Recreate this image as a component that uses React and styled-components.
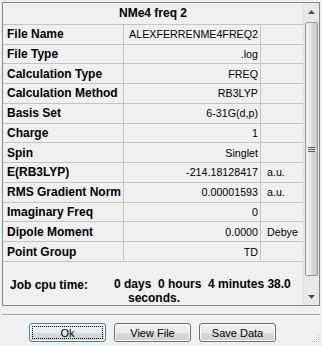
import React from 'react';
import styled, { createGlobalStyle } from 'styled-components';

const GlobalStyle = createGlobalStyle`
    html, body {
        margin: 0;
        padding: 0;
        background: #f0f0f0;
    }
    body {
        font-family: "Liberation Sans", Arial, sans-serif;
        font-size: 11px;
        color: #000;
    }
`;

const Window = styled.div`
    width: 322px;
    height: 346px;
    background: #f0f0f0;
    box-sizing: border-box;
    padding-top: 2px;
    position: relative;
    overflow: hidden;
`;

const Panel = styled.div`
    margin: 0 2px;
    height: 304px;
    border: 1px solid #828790;
    box-sizing: border-box;
    display: flex;
`;

const Content = styled.div`
    width: 300px;
    display: flex;
    flex-direction: column;
`;

const Title = styled.div`
    height: 21px;
    border-bottom: 1px solid #c4c4c4;
    display: flex;
    align-items: center;
    justify-content: center;
    font-weight: bold;
    font-size: 12px;
`;

const Row = styled.div`
    display: grid;
    grid-template-columns: 120px 136px 42px;
    column-gap: 1px;
    height: 19px;
    border-bottom: 1px solid #c4c4c4;
    background: linear-gradient(to right, transparent 120px, #c4c4c4 120px, #c4c4c4 121px, transparent 121px, transparent 257px, #c4c4c4 257px, #c4c4c4 258px, transparent 258px);
`;

const Cell = styled.div`
    display: flex;
    align-items: center;
    white-space: nowrap;
    overflow: hidden;
    justify-content: ${p => (p.$right ? 'flex-end' : 'flex-start')};
    padding: ${p => (p.$right ? '0 2px 0 0' : p.$unit ? '0 0 0 6px' : '0 0 0 4px')};
    font-weight: ${p => (p.$bold ? 'bold' : 'normal')};
    font-size: ${p => (p.$bold ? '12px' : '10.7px')};
`;

const Footer = styled.div`
    flex: 1;
    display: flex;
    padding: 16px 0 0 7px;
    font-weight: bold;
    font-size: 12px;
`;

const FooterLabel = styled.div`
    width: 104px;
`;

const FooterValue = styled.div`
    line-height: 14px;
    margin-top: -1px;
`;

const Indent = styled.div`
    padding-left: 14px;
`;

const ScrollBar = styled.div`
    width: 16px;
    background: #e8e8e8;
    border-left: 1px solid #e3e3e3;
    box-sizing: border-box;
    display: flex;
    flex-direction: column;
    align-items: center;
`;

const Arrow = styled.div`
    height: 17px;
    width: 100%;
    display: flex;
    align-items: center;
    justify-content: center;
`;

const Thumb = styled.div`
    width: 13px;
    margin-top: 2px;
    height: 254px;
    box-sizing: border-box;
    border: 1px solid #979797;
    border-radius: 2px;
    background: linear-gradient(to right, #f2f2f2, #e6e6e6 45%, #d7d7d7 55%, #cfcfcf);
    display: flex;
    align-items: center;
    justify-content: center;
`;

const Separator = styled.div`
    margin: 8px 2px 0 2px;
    border-top: 1px solid #a0a0a0;
    border-bottom: 1px solid #ffffff;
`;

const ButtonRow = styled.div`
    display: flex;
    gap: 8px;
    padding: 7px 0 0 29px;
`;

const Button = styled.button`
    width: 77px;
    height: 19px;
    padding: 0;
    font-family: "Liberation Sans", Arial, sans-serif;
    font-size: 11px;
    color: #000;
    border: 1px solid ${p => (p.$default ? '#3c7fb1' : '#707070')};
    border-radius: 3px;
    background: linear-gradient(to bottom, #f2f2f2 0%, #ebebeb 50%, #dddddd 50%, #cfcfcf 100%);
    box-shadow: inset 0 0 0 1px #fcfcfc;
    position: relative;

    &::after {
        content: '';
        display: ${p => (p.$default ? 'block' : 'none')};
        position: absolute;
        inset: 2px;
        border: 1px dotted #000;
    }
`;

const Grip = styled.svg`
    position: absolute;
    right: 2px;
    bottom: 3px;
`;

const rows = [
    ['File Name', 'ALEXFERRENME4FREQ2', ''],
    ['File Type', '.log', ''],
    ['Calculation Type', 'FREQ', ''],
    ['Calculation Method', 'RB3LYP', ''],
    ['Basis Set', '6-31G(d,p)', ''],
    ['Charge', '1', ''],
    ['Spin', 'Singlet', ''],
    ['E(RB3LYP)', '-214.18128417', 'a.u.'],
    ['RMS Gradient Norm', '0.00001593', 'a.u.'],
    ['Imaginary Freq', '0', ''],
    ['Dipole Moment', '0.0000', 'Debye'],
    ['Point Group', 'TD', ''],
];

export default function App() {
    return (
        <Window>
            <GlobalStyle />
            <Panel>
                <Content>
                    <Title>NMe4 freq 2</Title>
                    {rows.map(([label, value, unit]) => (
                        <Row key={label}>
                            <Cell $bold>{label}</Cell>
                            <Cell $right>{value}</Cell>
                            <Cell $unit>{unit}</Cell>
                        </Row>
                    ))}
                    <Footer>
                        <FooterLabel>Job cpu time:</FooterLabel>
                        <FooterValue>
                            <div>0 days&nbsp; 0 hours&nbsp; 4 minutes 38.0</div>
                            <Indent>seconds.</Indent>
                        </FooterValue>
                    </Footer>
                </Content>
                <ScrollBar>
                    <Arrow>
                        <svg width="7" height="4" viewBox="0 0 7 4"><path d="M0 4 L3.5 0 L7 4 Z" fill="#4d4d4d" /></svg>
                    </Arrow>
                    <Thumb>
                        <svg width="7" height="7" viewBox="0 0 7 7">
                            <path d="M0 1.5 H7 M0 3.5 H7 M0 5.5 H7" stroke="#5a5a5a" strokeWidth="1" />
                        </svg>
                    </Thumb>
                    <div style={{ flex: 1 }} />
                    <Arrow>
                        <svg width="7" height="4" viewBox="0 0 7 4"><path d="M0 0 L3.5 4 L7 0 Z" fill="#4d4d4d" /></svg>
                    </Arrow>
                </ScrollBar>
            </Panel>
            <Separator />
            <ButtonRow>
                <Button $default>Ok</Button>
                <Button>View File</Button>
                <Button>Save Data</Button>
            </ButtonRow>
            <Grip width="8" height="8" viewBox="0 0 8 8">
                <rect x="6" y="0" width="1" height="1" fill="#bcbcbc" />
                <rect x="4" y="2" width="1" height="1" fill="#bcbcbc" />
                <rect x="6" y="2" width="1" height="1" fill="#bcbcbc" />
                <rect x="2" y="4" width="1" height="1" fill="#bcbcbc" />
                <rect x="4" y="4" width="1" height="1" fill="#bcbcbc" />
                <rect x="6" y="4" width="1" height="1" fill="#bcbcbc" />
                <rect x="0" y="6" width="1" height="1" fill="#bcbcbc" />
                <rect x="2" y="6" width="1" height="1" fill="#bcbcbc" />
                <rect x="4" y="6" width="1" height="1" fill="#bcbcbc" />
                <rect x="6" y="6" width="1" height="1" fill="#bcbcbc" />
            </Grip>
        </Window>
    );
}
